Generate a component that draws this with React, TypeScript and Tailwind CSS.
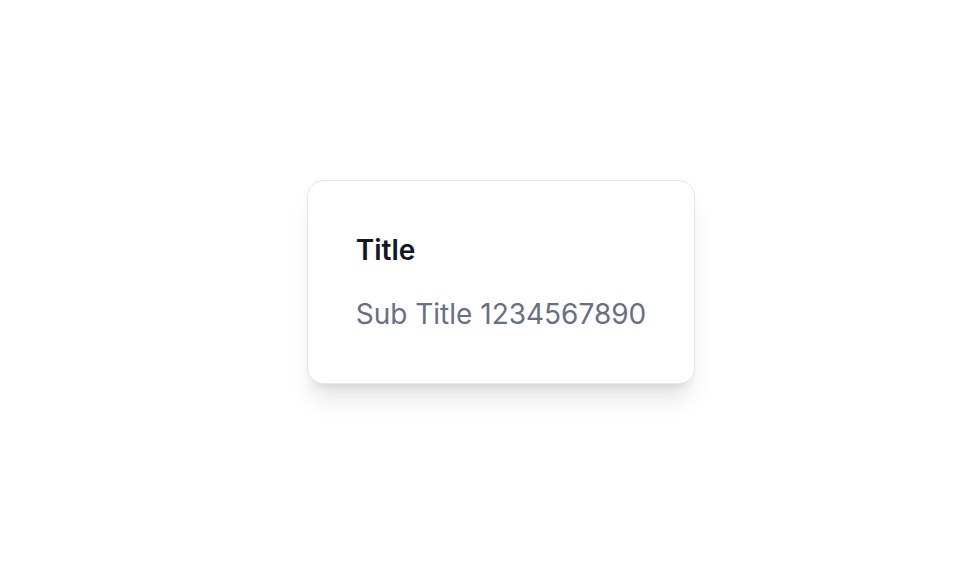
import React from 'react';

const App = () => {
    return (
        <div className="min-h-screen w-full bg-white flex items-center justify-center pl-[36px] pb-[20px]" style={{ fontFamily: 'Inter, "Noto Sans", sans-serif' }}>
            <div className="bg-white border border-gray-200 rounded-2xl shadow-xl p-12 flex flex-col gap-[22px]">
                <div className="text-[28px] leading-[42px] font-semibold text-gray-900">Title</div>
                <div className="text-[28px] leading-[42px] text-[#667085] whitespace-nowrap">Sub Title 1234567890</div>
            </div>
        </div>
    );
};

export default App;
